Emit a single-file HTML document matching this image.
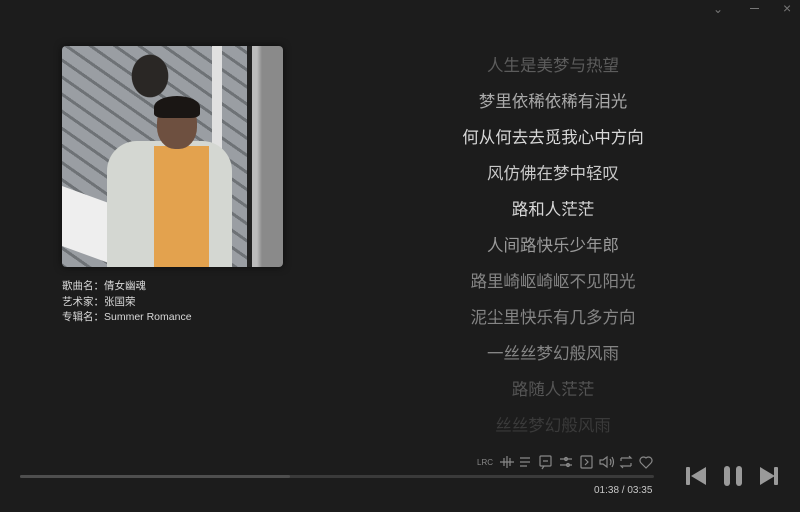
<!DOCTYPE html>
<html><head><meta charset="utf-8"><style>
*{margin:0;padding:0;box-sizing:border-box}
body{width:800px;height:512px;background:#1c1c1c;overflow:hidden;position:relative;font-family:"Liberation Sans","Noto Sans CJK SC",sans-serif}
.cover{position:absolute;left:62px;top:46px;width:221px;height:221px;border-radius:4px;overflow:hidden;
background:radial-gradient(ellipse 30px 35px at 88px 30px,#2a2725 60%,transparent 62%),
linear-gradient(90deg,transparent 0 150px,#e0e0e0 150px 160px,transparent 160px 185px,#222 185px 190px,#bbb 190px 195px,#8a8a8a 200px 221px),
repeating-linear-gradient(35deg,#6e7276 0 3px,#9a9ea3 3px 14px),#888c91;box-shadow:0 0 8px rgba(0,0,0,.6)}
.cover .jacket{position:absolute;left:45px;top:95px;width:125px;height:126px;background:#d4d7d2;border-radius:30px 30px 0 0}
.cover .shirt{position:absolute;left:92px;top:100px;width:55px;height:121px;background:#e3a24e}
.cover .head{position:absolute;left:95px;top:55px;width:40px;height:48px;background:#6e5040;border-radius:45%}
.cover .hair{position:absolute;left:92px;top:50px;width:46px;height:22px;background:#1a1614;border-radius:50% 50% 20% 20%}
.cover .board{position:absolute;left:0;top:150px;width:55px;height:60px;background:#eee;transform:skewY(20deg)}
.info{position:absolute;left:62px;top:279px;color:#d8d8d8;font-size:10.5px;line-height:15.5px}
.lyr{position:absolute;left:413px;width:280px;text-align:center;font-size:16.5px;font-family:"Liberation Sans","Noto Sans CJK SC",sans-serif}
.prog{position:absolute;left:20px;top:475px;width:634px;height:3px;background:#3a3a3a;border-radius:2px}
.prog div{width:270px;height:3px;background:#4e4e4e;border-radius:2px}
.time{position:absolute;left:594px;top:485px;color:#c8c8c8;font-size:10px}
.wc{position:absolute;top:2px;color:#777;font-size:12px}
svg{position:absolute}
</style></head><body>
<div class="wc" style="left:713px">⌄</div>
<div style="position:absolute;left:750px;top:8px;width:9px;height:1px;background:#777"></div>
<div class="wc" style="left:783px;top:0;font-size:14px">×</div>

<div class="cover"><div class="board"></div><div class="jacket"></div><div class="shirt"></div><div class="head"></div><div class="hair"></div></div>
<div class="info">歌曲名：倩女幽魂<br>艺术家：张国荣<br>专辑名：Summer Romance</div>

<div class="lyr" style="top:52px;color:#5c5c5c">人生是美梦与热望</div>
<div class="lyr" style="top:88px;color:#aaa">梦里依稀依稀有泪光</div>
<div class="lyr" style="top:124px;color:#d8d8d8">何从何去去觅我心中方向</div>
<div class="lyr" style="top:160px;color:#c8c8c8">风仿佛在梦中轻叹</div>
<div class="lyr" style="top:196px;color:#d8d8d8">路和人茫茫</div>
<div class="lyr" style="top:232px;color:#999">人间路快乐少年郎</div>
<div class="lyr" style="top:268px;color:#858585">路里崎岖崎岖不见阳光</div>
<div class="lyr" style="top:304px;color:#858585">泥尘里快乐有几多方向</div>
<div class="lyr" style="top:340px;color:#858585">一丝丝梦幻般风雨</div>
<div class="lyr" style="top:376px;color:#555">路随人茫茫</div>
<div class="lyr" style="top:412px;color:#3a3a3a">丝丝梦幻般风雨</div>

<svg width="180" height="20" style="left:475px;top:452px" fill="none" stroke="#888" stroke-width="1.2">
<text x="2" y="13" font-size="8" fill="#888" stroke="none" font-family="Liberation Sans">LRC</text>
<path d="M25 10h14M29 6v8M32 4v12M35 6v8"/>
<path d="M45 6h10M45 10h10M45 14h7"/>
<rect x="65" y="4" width="11" height="10" rx="1"/><path d="M68 9h5M69 14l-2 3"/>
<path d="M85 7h12M85 13h12"/><circle cx="91" cy="7" r="1.5"/><circle cx="93" cy="13" r="1.5"/>
<rect x="106" y="4" width="11" height="12" rx="1"/><path d="M110 7l3 3-3 3"/>
<path d="M125 8h3l4-3v10l-4-3h-3z M135 7q2 3 0 6M137 5q3 5 0 10"/>
<path d="M146 6h10l-2-2M156 14h-10l2 2M146 6v3M156 14v-3"/>
<path d="M171 16l-5-5a3.5 3.5 0 0 1 5-5a3.5 3.5 0 0 1 5 5z"/>
</svg>
<div class="prog"><div></div></div>
<div class="time">01:38 / 03:35</div>

<svg width="100" height="30" style="left:683px;top:461px" fill="#9a9a9a">
<rect x="3" y="6" width="4" height="18" rx="1"/><path d="M8 15l15-9v18z"/>
<rect x="41" y="5" width="6" height="20" rx="3"/><rect x="53" y="5" width="6" height="20" rx="3"/>
<path d="M77 6l15 9-15 9z"/><rect x="91" y="6" width="4" height="18" rx="1"/>
</svg>
</body></html>
